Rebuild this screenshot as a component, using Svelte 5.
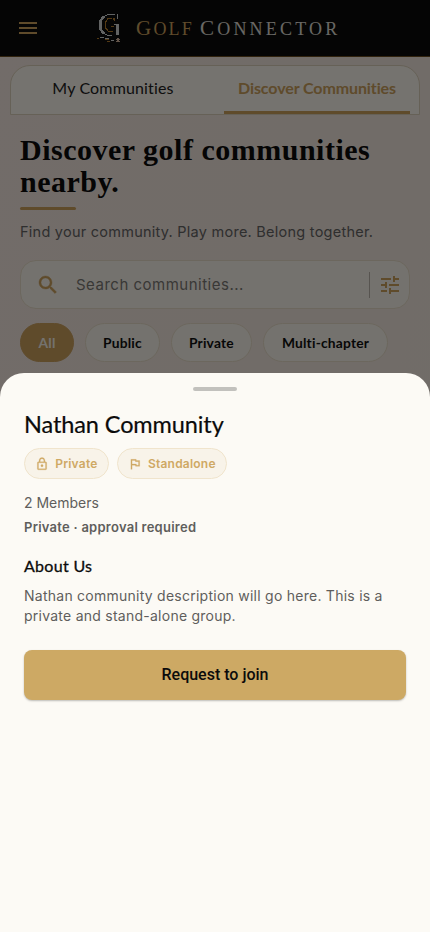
<script>
    let tab = 'discover';
    let filter = 'All';
    let query = '';

    const tabs = [
        { id: 'mine', label: 'My Communities' },
        { id: 'discover', label: 'Discover Communities' }
    ];
    const filters = ['All', 'Public', 'Private', 'Multi-chapter'];

    const community = {
        name: 'Nathan Community',
        members: 2,
        access: 'Private · approval required',
        about: 'Nathan community description will go here. This is a private and stand-alone group.'
    };
</script>

<style>
    :global(body) {
        margin: 0;
        background: #f8ebe0;
    }

    .screen {
        position: relative;
        height: 932px;
        overflow: hidden;
        box-sizing: border-box;
        font-family: Inter, sans-serif;
        background: linear-gradient(100deg, #f8ece4, #f7ebe2 55%, #f5ede3);
    }

    .screen * {
        box-sizing: border-box;
    }

    button {
        margin: 0;
        padding: 0;
        border: none;
        background: none;
    }

    svg {
        display: block;
        flex: none;
    }

    header {
        display: flex;
        align-items: center;
        height: 57px;
        padding: 0 16px;
        background: #0b0b0b;
        border-bottom: 1px solid #6b4d20;
        color: #cfa35f;
    }

    .logo {
        margin-left: 55px;
    }

    .brand {
        display: flex;
        gap: 6px;
        margin-left: 13px;
        font-family: "Liberation Serif", serif;
        font-size: 18px;
        line-height: 26px;
        text-transform: uppercase;
        letter-spacing: 3.2px;
        white-space: nowrap;
        color: #e4e1dc;
    }

    .brand span {
        display: block;
    }

    .brand span::first-letter {
        font-size: 21px;
    }

    .brand .gold {
        letter-spacing: 2.2px;
        color: #cfa35f;
    }

    .tabs {
        display: flex;
        gap: 18px;
        height: 50px;
        margin: 8px 10px 0;
        padding: 0 9px;
        background: #fefaf1;
        border: 1px solid #dfd3bd;
        border-radius: 20px 20px 0 0;
    }

    .tabs button {
        flex: 1 1 0;
        padding-bottom: 3px;
        border-bottom: 3px solid transparent;
        font-family: Lato, sans-serif;
        font-size: 16px;
        letter-spacing: .15px;
        white-space: nowrap;
        color: #222;
    }

    .tabs button.active {
        border-color: #cfa35f;
        color: #cfa35f;
        font-weight: bold;
        letter-spacing: -.1px;
    }

    .content {
        padding: 19px 20px 0;
    }

    h1 {
        margin: 0;
        font-family: "Liberation Serif", serif;
        font-size: 30px;
        line-height: 32px;
        letter-spacing: .5px;
        color: #0b0b0b;
    }

    .rule {
        width: 56px;
        height: 3px;
        margin-top: 9px;
        border-radius: 2px;
        background: #cfa35f;
    }

    .intro {
        margin: 12px 0 0;
        font-size: 14.5px;
        line-height: 20px;
        letter-spacing: .25px;
        white-space: nowrap;
        color: #666;
    }

    .search {
        display: flex;
        align-items: center;
        height: 49px;
        margin-top: 18px;
        padding: 0 7px 0 15px;
        border: 1px solid #ebe0cc;
        border-radius: 16px;
        background: #fdf9f0;
        color: #cfa35f;
    }

    .search .lens {
        stroke: currentColor;
        stroke-width: .4;
    }

    .search input {
        flex: 1;
        min-width: 0;
        margin-left: 16px;
        padding: 0;
        border: none;
        outline: none;
        background: none;
        font-family: Inter, sans-serif;
        font-size: 15px;
        letter-spacing: .5px;
    }

    .search input::placeholder {
        color: #7d7b77;
    }

    .divider {
        width: 1px;
        height: 26px;
        margin-right: 8px;
        background: #bdb8ae;
    }

    .filters {
        display: flex;
        gap: 11px;
        margin-top: 14px;
    }

    .filters button {
        min-width: 54px;
        height: 39px;
        padding: 0 17px;
        border: 1px solid #ebe0cc;
        border-radius: 20px;
        background: #fdf9f0;
        font-family: Lato, sans-serif;
        font-size: 13.8px;
        font-weight: bold;
        letter-spacing: .2px;
        white-space: nowrap;
        color: #111;
    }

    .filters button.active {
        border-color: #cfa35f;
        background: #cfa35f;
        color: #fdf9f0;
    }

    .filters button:last-child {
        padding: 0 18px;
    }

    .overlay {
        position: absolute;
        inset: 0;
        background: rgba(0, 0, 0, .54);
    }

    .sheet {
        position: absolute;
        left: 0;
        right: 0;
        top: 373px;
        bottom: 0;
        padding: 14px 24px 0;
        border-radius: 24px 24px 0 0;
        background: #fcfaf5;
    }

    .handle {
        width: 44px;
        height: 4px;
        margin: 0 auto;
        border-radius: 2px;
        background: #c2c1bd;
    }

    h2, h3 {
        margin: 0;
        font-family: Lato, sans-serif;
        font-weight: normal;
        color: #0b0b0b;
    }

    h2 {
        margin-top: 18px;
        font-size: 23.5px;
        line-height: 30px;
        letter-spacing: -.1px;
        -webkit-text-stroke: .2px #0b0b0b;
    }

    .chips {
        display: flex;
        gap: 8px;
        margin-top: 9px;
    }

    .chip {
        display: flex;
        align-items: center;
        gap: 6px;
        height: 31px;
        padding: 0 10.2px;
        border: 1px solid #f0e4cc;
        border-radius: 16px;
        background: #f8f3e9;
        font-size: 12px;
        font-weight: 600;
        letter-spacing: .22px;
        color: #cfa964;
    }

    .chip svg {
        stroke: currentColor;
        stroke-width: .4;
    }

    .members, .access, .about {
        margin: 0;
        color: #5f5e5c;
        letter-spacing: .25px;
    }

    .members {
        margin-top: 14px;
        font-size: 14px;
        line-height: 20px;
        letter-spacing: 0;
    }

    .access {
        margin-top: 5px;
        font-size: 13px;
        line-height: 19px;
        font-weight: 600;
    }

    h3 {
        margin-top: 18px;
        font-size: 16px;
        line-height: 22px;
        letter-spacing: .3px;
        -webkit-text-stroke: .3px #0b0b0b;
    }

    .about {
        margin-top: 9px;
        font-size: 14px;
        line-height: 20px;
    }

    .join {
        display: block;
        width: 100%;
        height: 50px;
        margin-top: 24px;
        padding-bottom: 2px;
        border-radius: 8px;
        background: #cda964;
        box-shadow: 0 1px 2px rgba(0, 0, 0, .25);
        font-family: Roboto, sans-serif;
        font-size: 16px;
        font-weight: 500;
        color: #0b0b0b;
    }
</style>

<div class="screen">
    <header>
        <svg width="24" height="24" viewBox="0 0 24 24" fill="currentColor"><path d="M3 18h18v-2H3v2zm0-5h18v-2H3v2zm0-7v2h18V6H3z"/></svg>
        <svg class="logo" width="28" height="30" viewBox="0 0 28 30" fill="none" shape-rendering="crispEdges">
            <path d="M20 1.5h-7L9 3.5M9 20.5l4 2h4" stroke="#d5d8d8" stroke-width="1.2"/>
            <path d="M9 3L5.5 8v8L9 21" stroke="#d5d8d8" stroke-width="2.6"/>
            <path d="M22.5 1v5" stroke="#d5d8d8"/>
            <path d="M19 11.5h5" stroke="#d5d8d8"/>
            <path d="M22.5 11v11" stroke="#d5d8d8" stroke-width="2.4"/>
            <path d="M19.5 8V6H18M17 5.5h-4L10.5 9v6l3 3.500h4M16 13.500h3" stroke="#b57d2c" stroke-width="1.2"/>
            <path d="M2 25.5h2M10 26.5h4M12 28.5h3" stroke="#b57d2c"/>
            <path d="M5 24.500h4M10 25.500h4M16 27.500h3" stroke="#d5d8d8"/>
            <path d="M22 25.500h2M21 26.500h4M22 27.500h2M21 28.500h4" stroke="#d8b7a0"/>
        </svg>
        <div class="brand"><span class="gold">Golf</span> <span>Connector</span></div>
    </header>

    <nav class="tabs">
        {#each tabs as t}
            <button class:active={tab === t.id} on:click={() => tab = t.id}>{t.label}</button>
        {/each}
    </nav>

    <div class="content">
        <h1>Discover golf communities nearby.</h1>
        <div class="rule"></div>
        <p class="intro">Find your community. Play more. Belong together.</p>

        <div class="search">
            <svg class="lens" width="24" height="24" viewBox="0 0 24 24" fill="currentColor"><path d="M15.5 14h-.79l-.28-.27C15.41 12.59 16 11.11 16 9.5 16 5.91 13.09 3 9.5 3S3 5.91 3 9.5 5.91 16 9.5 16c1.61 0 3.09-.59 4.23-1.57l.27.28v.79l5 4.99L20.49 19l-4.99-5zm-6 0C7.01 14 5 11.99 5 9.5S7.01 5 9.5 5 14 7.01 14 9.5 11.99 14 9.5 14z"/></svg>
            <input type="text" placeholder="Search communities..." bind:value={query}>
            <div class="divider"></div>
            <svg width="24" height="24" viewBox="0 0 24 24" fill="currentColor"><path d="M3 17v2h6v-2H3zM3 5v2h10V5H3zm10 16v-2h8v-2h-8v-2h-2v6h2zM7 9v2H3v2h4v2h2V9H7zm14 4v-2H11v2h10zm-6-4h2V7h4V5h-4V3h-2v6z"/></svg>
        </div>

        <div class="filters">
            {#each filters as f}
                <button class:active={filter === f} on:click={() => filter = f}>{f}</button>
            {/each}
        </div>
    </div>

    <div class="overlay"></div>

    <section class="sheet">
        <div class="handle"></div>
        <h2>{community.name}</h2>
        <div class="chips">
            <div class="chip">
                <svg width="14" height="14" viewBox="0 0 24 24" fill="currentColor"><path d="M18 8h-1V6c0-2.76-2.24-5-5-5S7 3.24 7 6v2H6c-1.1 0-2 .9-2 2v10c0 1.1.9 2 2 2h12c1.1 0 2-.9 2-2V10c0-1.1-.9-2-2-2zM9 6c0-1.66 1.34-3 3-3s3 1.34 3 3v2H9V6zm9 14H6V10h12v10zm-6-3c1.1 0 2-.9 2-2s-.9-2-2-2-2 .9-2 2 .9 2 2 2z"/></svg>
                Private
            </div>
            <div class="chip">
                <svg width="14" height="14" viewBox="0 0 24 24" fill="currentColor"><path d="M12.36 6l.4 2H18v6h-3.36l-.4-2H7V6h5.36M14 4H5v17h2v-7h5.6l.4 2h7V6h-5.6L14 4z"/></svg>
                Standalone
            </div>
        </div>
        <p class="members">{community.members} Members</p>
        <p class="access">{community.access}</p>
        <h3>About Us</h3>
        <p class="about">{community.about}</p>
        <button class="join">Request to join</button>
    </section>
</div>
